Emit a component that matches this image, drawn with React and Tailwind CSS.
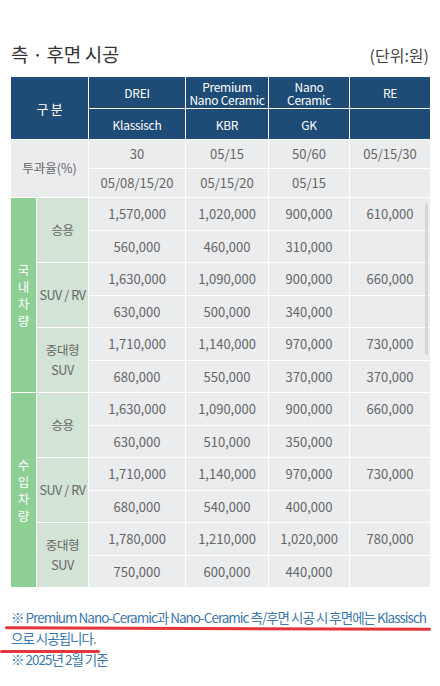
import React from 'react';

const FONT = { fontFamily: '"Noto Sans CJK KR", "Noto Sans", sans-serif' };

const rows = [
  {
    group: '국내차량',
    subs: [
      { name: ['승용'], vals: [['1,570,000', '1,020,000', '900,000', '610,000'], ['560,000', '460,000', '310,000', '']] },
      { name: ['SUV / RV'], vals: [['1,630,000', '1,090,000', '900,000', '660,000'], ['630,000', '500,000', '340,000', '']] },
      { name: ['중대형', 'SUV'], vals: [['1,710,000', '1,140,000', '970,000', '730,000'], ['680,000', '550,000', '370,000', '370,000']] },
    ],
  },
  {
    group: '수입차량',
    subs: [
      { name: ['승용'], vals: [['1,630,000', '1,090,000', '900,000', '660,000'], ['630,000', '510,000', '350,000', '']] },
      { name: ['SUV / RV'], vals: [['1,710,000', '1,140,000', '970,000', '730,000'], ['680,000', '540,000', '400,000', '']] },
      { name: ['중대형', 'SUV'], vals: [['1,780,000', '1,210,000', '1,020,000', '780,000'], ['750,000', '600,000', '440,000', '']] },
    ],
  },
];

const Head = ({ children, className = '' }) => (
  <div className={`bg-[#1e4c77] text-white text-[12px] leading-[13px] tracking-[-0.3px] whitespace-nowrap flex items-center justify-center text-center ${className}`}>
    {children}
  </div>
);

const Cell = ({ children }) => (
  <div className="bg-[#ebecee] text-[#666] text-[13px] flex items-center justify-center">{children}</div>
);

export default function App() {
  return (
    <div className="relative w-[440px] h-[686px] bg-white overflow-hidden" style={FONT}>
      {/* Title */}
      <div className="flex items-end justify-between px-[11px] pt-[38px] h-[66px]">
        <h2 className="text-[19px] leading-[24px] text-[#333] font-normal tracking-[-0.3px]">측 · 후면 시공</h2>
        <span className="text-[16px] leading-[22px] text-[#444]">(단위:원)</span>
      </div>

      {/* Table */}
      <div
        className="ml-[11px] mt-[11px] w-[419px] grid gap-px bg-white grid-cols-[25px_51px_96px_82px_80px_80px]"
        style={{ gridTemplateRows: '31px 30px 28px 28px repeat(12, 31.5px)' }}
      >
        <Head className="col-span-2 row-span-2 text-[13px]">구 분</Head>
        <Head>DREI</Head>
        <Head>Premium<br />Nano Ceramic</Head>
        <Head>Nano<br />Ceramic</Head>
        <Head>RE</Head>
        <Head>Klassisch</Head>
        <Head>KBR</Head>
        <Head>GK</Head>
        <Head />

        <div className="col-span-2 row-span-2 bg-[#ebecee] text-[#666] text-[12.5px] flex items-center justify-center">
          투과율(%)
        </div>
        <Cell>30</Cell>
        <Cell>05/15</Cell>
        <Cell>50/60</Cell>
        <Cell>05/15/30</Cell>
        <Cell>05/08/15/20</Cell>
        <Cell>05/15/20</Cell>
        <Cell>05/15</Cell>
        <Cell />

        {rows.map((g) => (
          <React.Fragment key={g.group}>
            <div className="row-span-6 bg-[#8dcf95] text-white text-[12.5px] leading-[17px] flex flex-col items-center justify-center">
              {g.group.split('').map((c, i) => (
                <span key={i}>{c}</span>
              ))}
            </div>
            {g.subs.map((s, si) => (
              <React.Fragment key={si}>
                <div className="row-span-2 bg-[#d3e3d5] text-[#666] text-[12.5px] leading-[20px] tracking-[-0.4px] whitespace-nowrap flex flex-col items-center justify-center">
                  {s.name.map((n) => (
                    <span key={n}>{n}</span>
                  ))}
                </div>
                {s.vals[0].map((v, i) => (
                  <Cell key={'a' + i}>{v}</Cell>
                ))}
                {s.vals[1].map((v, i) => (
                  <Cell key={'b' + i}>{v}</Cell>
                ))}
              </React.Fragment>
            ))}
          </React.Fragment>
        ))}
      </div>

      {/* Notes */}
      <div className="px-[11px] pt-[20px] text-[#3a78b0] text-[13.5px] leading-[21px] tracking-[-1px] whitespace-nowrap">
        <p>※ Premium Nano-Ceramic과 Nano-Ceramic 측/후면 시공 시 후면에는 Klassisch</p>
        <p>으로 시공됩니다.</p>
        <p>※ 2025년 2월 기준</p>
      </div>

      {/* scroll indicator */}
      <div className="absolute left-[425px] top-[203px] w-[3px] h-[152px] rounded-full bg-[#d6d6d8]" />

      {/* red pen marks */}
      <div className="absolute left-[5px] top-[627px] w-[426px] h-[3px] rounded-full bg-[#e5353a] rotate-[0.2deg]" />
      <div className="absolute left-0 top-[650px] w-[100px] h-[3px] rounded-full bg-[#e5353a]" />
    </div>
  );
}
